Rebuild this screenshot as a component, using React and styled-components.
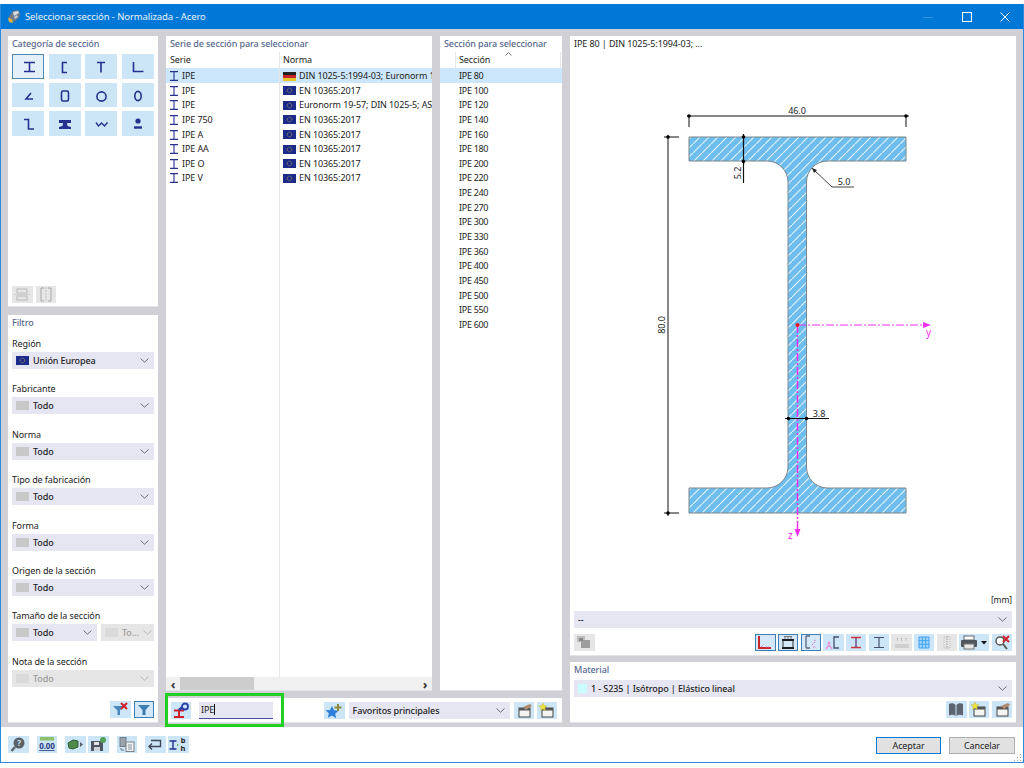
import React from "react";
import styled, { createGlobalStyle } from "styled-components";

const GlobalStyle = createGlobalStyle`
  html, body {
    margin: 0;
    background: #fff;
    font-family: "Noto Sans", "Open Sans", sans-serif;
    font-size: 9px;
    letter-spacing: -0.1px;
    color: #222;
  }
`;

const INK = "#26318f";

const Glyph = ({ children, w = 20, h = 17 }) => (
  <svg width={w} height={h} viewBox={`0 0 ${w} ${h}`} style={{ display: "block", flex: "none" }}>
    {children}
  </svg>
);

const Cat = ({ children }) => (
  <Glyph w={32} h={24}>
    <g fill="none" stroke={INK} strokeWidth="1.6">{children}</g>
  </Glyph>
);

const categories = [
  <path d="M12 8.5h11M12 17.5h11M17.5 8.5v9" />,
  <path d="M18 8.5h-4.5v10H18" />,
  <path d="M12 8.5h8M16 8.5v10" />,
  <path d="M11.5 8v9.5h10" />,
  <path d="M19 10l-5 6h7" />,
  <rect x="12.5" y="8" width="7" height="10" rx="1.5" />,
  <circle cx="16.5" cy="13.5" r="4.6" />,
  <ellipse cx="16" cy="13" rx="3.2" ry="4.6" />,
  <path d="M12 8.5h4.5v9.5h5.5" />,
  <path fill={INK} stroke="none" d="M10 9h12v3h-4l.5 3 3.5 1v2H10v-2l3.5-1 .5-3h-4z" />,
  <path strokeWidth="1.4" d="M11 11.5l2.5 3.5 3-3 3 3 3-3.5" />,
  <g>
    <circle cx="16" cy="10" r="2.6" fill={INK} stroke="none" />
    <path d="M12 16.5h8" strokeWidth="2.4" />
  </g>,
];

const EuFlag = () => (
  <Glyph w={13} h={9}>
    <rect width="13" height="9" fill="#1c2a8c" />
    <circle cx="6.5" cy="4.5" r="2.3" fill="none" stroke="#a99a4c" strokeWidth="0.9" strokeDasharray="0.9 0.6" />
  </Glyph>
);

const DeFlag = () => (
  <Glyph w={13} h={9}>
    <rect width="13" height="3" fill="#222" />
    <rect y="3" width="13" height="3" fill="#c8242b" />
    <rect y="6" width="13" height="3" fill="#e8c52c" />
  </Glyph>
);

const ListI = () => (
  <Glyph w={8} h={10}>
    <path d="M0 .6h8M0 9.4h8M4 .6v8.8" stroke={INK} strokeWidth="1.1" fill="none" />
  </Glyph>
);

const Chevron = ({ faded }) => (
  <Glyph w={9} h={5}>
    <path d="M.5.5L4.5 4.2 8.5.5" fill="none" stroke={faded ? "#b5b5b5" : "#6f6f78"} strokeWidth="1" />
  </Glyph>
);

const WindowBox = ({ children }) => (
  <Glyph>
    <rect x="5" y="6" width="11" height="9" fill="#f4f4f4" stroke="#444" />
    <rect x="5" y="6" width="11" height="2.5" fill="#555" />
    {children}
  </Glyph>
);

const icons = {
  flip: (
    <Glyph>
      <rect x="5" y="3" width="10" height="4" fill="none" stroke="#b8b8b8" />
      <rect x="5" y="10" width="10" height="4" fill="none" stroke="#b8b8b8" />
      <path d="M2 8.5h16" stroke="#d0d0d0" />
    </Glyph>
  ),
  mirror: (
    <Glyph>
      <path d="M8 2H5v13h3M12 2h3v13h-3" fill="none" stroke="#a8a8a8" />
      <path d="M10 1v15" stroke="#c0c0c0" strokeDasharray="2 1" />
    </Glyph>
  ),
  funnelX: (
    <Glyph>
      <path d="M3 5h11l-4 4.5V14H7.5V9.5z" fill="#4c88bd" />
      <path d="M11 2l6 6M17 2l-6 6" stroke="#d2202a" strokeWidth="2" />
    </Glyph>
  ),
  funnel: (
    <Glyph>
      <path d="M4 4h12l-4.5 5V14h-3V9z" fill="#3f7db5" />
    </Glyph>
  ),
  searchSection: (
    <Glyph>
      <path d="M3 8.5h10M3 15h10M8 8.5V15" stroke="#d2202a" strokeWidth="2" fill="none" />
      <path d="M8 8l3-2.500" stroke="#2a3fa6" strokeWidth="2.500" />
      <circle cx="14" cy="4.5" r="3" fill="#cde6f7" stroke="#2a3fa6" strokeWidth="1.800" />
    </Glyph>
  ),
  starPlus: (
    <Glyph>
      <path d="M8 4l2 4.300 4.500.5-3.300 3 .9 4.500L8 13.500 3.900 15.800l.9-4.500-3.300-3L6 8z" fill="#2e7fdb" />
      <path d="M14 2v7M10.500 5.500h7" stroke="#8b8a3a" strokeWidth="2" />
    </Glyph>
  ),
  editWindow: (
    <WindowBox>
      <path d="M9 5l7-3 2 2-6 4z" fill="#b08a70" />
    </WindowBox>
  ),
  newWindow: (
    <WindowBox>
      <path d="M6 1l1.200 2.500L10 4 7.800 5.600 8.400 8.400 6 7 3.600 8.400 4.200 5.600 2 4l2.800-.5z" fill="#f2e23c" stroke="#b5a82a" strokeWidth="0.4" />
    </WindowBox>
  ),
  book: (
    <Glyph>
      <path d="M3 3c2-1 5-1 6.500 1v11C8 13.500 5 13.500 3 14.500zM17 3c-2-1-5-1-6.500 1v11c1.500-1.500 4.500-1.500 6.500-.5z" fill="#5d6470" />
    </Glyph>
  ),
  corner: (
    <Glyph>
      <path d="M4 2v12h12" fill="none" stroke="#c8282c" strokeWidth="2" />
      <path d="M6 13l3-3M11 13h3" stroke="#d86bd0" strokeDasharray="1 1" />
    </Glyph>
  ),
  flange: (
    <Glyph>
      <path d="M4 6h12M4 14h12" stroke="#1d1d25" strokeWidth="2" />
      <path d="M5 6v8M15 6v8" stroke="#333" />
      <path d="M6 2.500h8M7 5V2M10 5V2M13 5V2" stroke="#777" />
    </Glyph>
  ),
  cornerMuted: (
    <Glyph>
      <path d="M5 2v12M5 2h4M5 14h4" fill="none" stroke="#5b6580" strokeWidth="1.300" />
      <path d="M11 11l3-3V5M12 13h3" stroke="#d86bd0" strokeDasharray="1.500 1" fill="none" />
    </Glyph>
  ),
  channelPink: (
    <Glyph>
      <path d="M16 3h-5v11h5" fill="none" stroke="#46506e" strokeWidth="1.300" />
      <circle cx="6" cy="9" r="1.500" fill="#e29ad8" />
      <path d="M3 15l3-4 3 4" fill="none" stroke="#e29ad8" strokeWidth="1.500" />
    </Glyph>
  ),
  iRed: (
    <Glyph>
      <path d="M5 3.500h10M5 13.500h10" stroke="#d2383c" strokeWidth="1.500" />
      <path d="M10 3.500v10" stroke="#5c3a78" strokeWidth="1.300" />
    </Glyph>
  ),
  iBlue: (
    <Glyph>
      <path d="M5 3.500h10M5 13.500h10M10 3.500v10" stroke="#46506e" strokeWidth="1.200" fill="none" />
    </Glyph>
  ),
  numbers: (
    <Glyph>
      <path d="M5.500 4v3M9.500 4v3M14 4v3" stroke="#a6a6a6" strokeDasharray="1 .5" />
      <path d="M3 11h14M3 13h14" stroke="#b8b8b8" />
    </Glyph>
  ),
  grid: (
    <Glyph>
      <rect x="5" y="3" width="10" height="11" fill="#a4d8fb" />
      <path d="M5 3h10v11H5zM8.300 3v11M11.700 3v11M5 6.700h10M5 10.300h10" stroke="#3d9fee" fill="none" />
    </Glyph>
  ),
  dotted: (
    <Glyph>
      <path d="M7 3h6v11H7z" fill="none" stroke="#bdbdbd" strokeDasharray="1 1" />
      <path d="M10 2v13" stroke="#9e9e9e" strokeDasharray="1.500 1" />
    </Glyph>
  ),
  printer: (
    <Glyph w={30}>
      <rect x="5" y="2" width="10" height="4" fill="#fff" stroke="#666" />
      <rect x="2" y="6" width="16" height="7" rx="1" fill="#50565c" />
      <rect x="5" y="10" width="10" height="5" fill="#e8e8e8" stroke="#777" />
      <path d="M22 7h6l-3 3.500z" fill="#111" />
    </Glyph>
  ),
  searchX: (
    <Glyph>
      <circle cx="8" cy="7" r="4" fill="#fff" stroke="#555" strokeWidth="1.500" />
      <path d="M11 10l4 5" stroke="#555" strokeWidth="2" />
      <path d="M11 2l6 6M17 2l-6 6" stroke="#d2202a" strokeWidth="2" />
    </Glyph>
  ),
  help: (
    <Glyph>
      <circle cx="11" cy="7" r="5.500" fill="#5b6066" />
      <path d="M7 11l-3.500 4" stroke="#5b6066" strokeWidth="2.400" />
      <text x="11" y="10" textAnchor="middle" fontSize="8" fontWeight="700" fill="#cde6f7">?</text>
    </Glyph>
  ),
  zero: (
    <Glyph>
      <rect x="3" y="1" width="14" height="3.500" fill="#8ec06a" />
      <text x="10" y="13" textAnchor="middle" fontSize="8" fontWeight="700" fill="#2a3a7e" textDecoration="underline">0.00</text>
    </Glyph>
  ),
  greenArrow: (
    <Glyph>
      <path d="M3 7l5-3 5 1v6l-5 2-4-1z" fill="#4f8a4a" stroke="#2f5f38" />
      <path d="M15 6l3 2.500-3 2.500z" fill="#59606a" />
    </Glyph>
  ),
  saveGreen: (
    <Glyph>
      <path d="M3 5h10l2 2v8H3z" fill="#4f5660" />
      <rect x="6" y="6" width="5" height="3" fill="#e4e4e4" />
      <rect x="6" y="11" width="6" height="4" fill="#cfd3d8" />
      <circle cx="15" cy="4" r="3" fill="#54a054" />
    </Glyph>
  ),
  docs: (
    <Glyph>
      <rect x="3" y="1.500" width="6" height="9" fill="#9aa2aa" stroke="#747b84" />
      <rect x="9" y="6" width="8" height="9.500" fill="#eef0f2" stroke="#7b828a" />
      <path d="M11 9h4M11 11h4M11 13h4" stroke="#8d949c" />
      <path d="M4 12v2h3" fill="none" stroke="#747b84" />
    </Glyph>
  ),
  back: (
    <Glyph>
      <path d="M6 4.500h9.500v6H4M7 7.500l-3 3 3 3" fill="none" stroke="#3f4656" strokeWidth="1.400" />
    </Glyph>
  ),
  sizes: (
    <Glyph>
      <path d="M1.500 5h7M1.500 13h7M5 5v8" stroke={INK} strokeWidth="1.400" />
      <path d="M9 8l2 1-2 1z" fill="#4aa24a" />
      <text x="15" y="7" textAnchor="middle" fontSize="7.500" fontWeight="700" fill="#222">b</text>
      <text x="15" y="15" textAnchor="middle" fontSize="7.500" fontWeight="700" fill="#222">h</text>
    </Glyph>
  ),
  chip: (
    <Glyph>
      <rect x="3" y="2" width="8" height="6" fill="#bdbdbd" />
      <rect x="7" y="6" width="9" height="8" fill="#9d9d9d" />
      <rect x="5" y="4" width="4" height="3" fill="#888" />
    </Glyph>
  ),
};

const series = [
  ["IPE", "DIN 1025-5:1994-03; Euronorm 19-57", "de"],
  ["IPE", "EN 10365:2017"],
  ["IPE", "Euronorm 19-57; DIN 1025-5; ASTM A6"],
  ["IPE 750", "EN 10365:2017"],
  ["IPE A", "EN 10365:2017"],
  ["IPE AA", "EN 10365:2017"],
  ["IPE O", "EN 10365:2017"],
  ["IPE V", "EN 10365:2017"],
];

const sizes = [80, 100, 120, 140, 160, 180, 200, 220, 240, 270, 300, 330, 360, 400, 450, 500, 550, 600];

const filters = ["Fabricante", "Norma", "Tipo de fabricación", "Forma", "Origen de la sección"];

const previewTools = [
  ["corner", "active"], ["flange", "active"], ["cornerMuted", "active"], ["channelPink"], ["iRed"],
  ["iBlue"], ["numbers", "off"], ["grid"], ["dotted", "off"],
];

const Select = ({ flag, swatch, value, off }) => (
  <SelectBox $off={off}>
    {flag}
    {swatch && <Swatch $off={off} />}
    <SelectText $off={off}>{value}</SelectText>
    <Chevron faded={off} />
  </SelectBox>
);

const Section = () => (
  <Drawing viewBox="570 52 446 540" width="446" height="540">
    <defs>
      <pattern id="hatch" width="9" height="9" patternUnits="userSpaceOnUse">
        <rect width="9" height="9" fill="#6dbdee" />
        <path d="M-1 10L10 -1" stroke="#e0f2fc" strokeWidth="1.2" />
      </pattern>
    </defs>
    <path
      d="M689 137H906V161H827A21 21 0 0 0 806.5 182V467A21 21 0 0 0 827 488H906V513H689V488H767A21 21 0 0 0 788 467V182A21 21 0 0 0 767 161H689Z"
      fill="url(#hatch)"
      stroke="#7d8588"
      strokeWidth="1"
    />
    <g stroke="#111" strokeWidth="1" fill="none">
      <path d="M687 116H909M689 116V127M906 116V127" />
      <path d="M668 135V516M664 137H679M664 513H679" />
      <path d="M743.500 134V183" strokeWidth="1.200" />
      <path d="M785 418.500H829" />
    </g>
    <path d="M812 168L832 187H854" stroke="#444" fill="none" />
    <path d="M812 168l5 2-3 3z" fill="#222" />
    <g fill="#000">
      <circle cx="689" cy="116" r="1.800" />
      <circle cx="906" cy="116" r="1.800" />
      <circle cx="668" cy="137" r="1.800" />
      <circle cx="668" cy="513" r="1.800" />
      <circle cx="743.500" cy="137" r="1.800" />
      <circle cx="743.500" cy="161.500" r="1.800" />
      <circle cx="788.500" cy="418.500" r="1.800" />
      <circle cx="806.500" cy="418.500" r="1.800" />
    </g>
    <g fill="#222" fontSize="9" fontFamily="Noto Sans, sans-serif">
      <text x="797" y="114" textAnchor="middle">46.0</text>
      <text x="844" y="185" textAnchor="middle">5.0</text>
      <text x="819" y="417" textAnchor="middle">3.8</text>
      <text transform="translate(665 325) rotate(-90)" textAnchor="middle">80.0</text>
      <text transform="translate(741 173) rotate(-90)" textAnchor="middle">5.2</text>
    </g>
    <path d="M798 325H925" stroke="#ee30ee" strokeDasharray="8 2 2 2" />
    <path d="M797.500 325V530" stroke="#ee30ee" strokeWidth="1.500" strokeDasharray="8 2 2 2" />
    <path d="M923 322l8 3-8 3zM794.500 529l3 8 3-8z" fill="#ee30ee" />
    <circle cx="797.500" cy="325" r="2" fill="#e8141c" />
    <g fill="#ee30ee" fontSize="10" fontFamily="Noto Sans, sans-serif">
      <text x="926" y="336">y</text>
      <text x="788" y="539">z</text>
    </g>
  </Drawing>
);

export default function App() {
  return (
    <Page>
      <GlobalStyle />
      <TitleBar>
        <svg width="14" height="15" viewBox="0 0 14 15">
          <path d="M1 9l5-7 5-1 2 3-1 5-5 4z" fill="#6f7a86" />
          <path d="M6 3l5-1 1 2-5 3z" fill="#d6dde4" />
          <path d="M7 8l3-2 1 2-3 2z" fill="#c2ccd6" />
          <path d="M1 9l4 1 1 4-4-1z" fill="#e2b23a" />
        </svg>
        <TitleText>Seleccionar sección - Normalizada - Acero</TitleText>
        <WindowButtons>
          <svg width="10" height="10" viewBox="0 0 10 10"><path d="M0 5.5h10" stroke="#3b94de" /></svg>
          <svg width="10" height="10" viewBox="0 0 10 10"><rect x=".5" y=".5" width="9" height="9" fill="none" stroke="#fff" /></svg>
          <svg width="10" height="10" viewBox="0 0 10 10"><path d="M.5.5l9 9M9.5.5l-9 9" stroke="#fff" /></svg>
        </WindowButtons>
      </TitleBar>

      <Main>
        <LeftColumn>
          <CategoryPanel>
            <PanelTitle>Categoría de sección</PanelTitle>
            <CategoryGrid>
              {categories.map((shape, i) => (
                <CategoryButton key={i} $active={i === 0}><Cat>{shape}</Cat></CategoryButton>
              ))}
            </CategoryGrid>
            <ToolRow>
              <ToolButton $off>{icons.flip}</ToolButton>
              <ToolButton $off>{icons.mirror}</ToolButton>
            </ToolRow>
          </CategoryPanel>

          <FilterPanel>
            <PanelTitle>Filtro</PanelTitle>
            <FilterGroup>
              <FilterLabel>Región</FilterLabel>
              <Select flag={<EuFlag />} value="Unión Europea" />
            </FilterGroup>
            {filters.map((label) => (
              <FilterGroup key={label}>
                <FilterLabel>{label}</FilterLabel>
                <Select swatch value="Todo" />
              </FilterGroup>
            ))}
            <FilterGroup>
              <FilterLabel>Tamaño de la sección</FilterLabel>
              <SplitRow>
                <Select swatch value="Todo" />
                <Select swatch off value="To..." />
              </SplitRow>
            </FilterGroup>
            <FilterGroup>
              <FilterLabel>Nota de la sección</FilterLabel>
              <Select swatch off value="Todo" />
            </FilterGroup>
            <FilterTools>
              <ToolButton>{icons.funnelX}</ToolButton>
              <ToolButton $active>{icons.funnel}</ToolButton>
            </FilterTools>
          </FilterPanel>
        </LeftColumn>

        <MiddleColumn>
          <ListsRow>
            <SeriesPanel>
              <PanelTitle>Serie de sección para seleccionar</PanelTitle>
              <SeriesHead>
                <span>Serie</span>
                <NormCell>Norma</NormCell>
              </SeriesHead>
              <SeriesBody>
                {series.map(([name, norm, flag], i) => (
                  <SeriesRow key={i} $selected={i === 0}>
                    <SerieCell><ListI /><span>{name}</span></SerieCell>
                    <NormCell>
                      {flag === "de" ? <DeFlag /> : <EuFlag />}
                      <NormText>{norm}</NormText>
                    </NormCell>
                  </SeriesRow>
                ))}
                <SeriesFiller><span /><NormCell /></SeriesFiller>
              </SeriesBody>
              <ScrollBar>
                <ScrollArrow>‹</ScrollArrow>
                <ScrollThumb />
                <ScrollArrow>›</ScrollArrow>
              </ScrollBar>
            </SeriesPanel>

            <SizePanel>
              <PanelTitle>Sección para seleccionar</PanelTitle>
              <SizeHead>
                <SortMark>
                  <svg width="7" height="4" viewBox="0 0 7 4"><path d="M.5 3.5L3.5.5l3 3" fill="none" stroke="#777" /></svg>
                </SortMark>
                <span>Sección</span>
              </SizeHead>
              {sizes.map((size, i) => (
                <SizeRow key={size} $selected={i === 0}>IPE {size}</SizeRow>
              ))}
            </SizePanel>
          </ListsRow>

          <SearchBar>
            <Highlight />
            <ToolButton>{icons.searchSection}</ToolButton>
            <SearchInput>IPE<Caret /></SearchInput>
            <FavoriteTools>
              <ToolButton>{icons.starPlus}</ToolButton>
              <Select value="Favoritos principales" />
              <ToolPair>
                <ToolButton>{icons.editWindow}</ToolButton>
                <ToolButton>{icons.newWindow}</ToolButton>
              </ToolPair>
            </FavoriteTools>
          </SearchBar>
        </MiddleColumn>

        <RightColumn>
          <PreviewPanel>
            <PreviewTitle>IPE 80 | DIN 1025-5:1994-03; ...</PreviewTitle>
            <Section />
            <UnitLabel>[mm]</UnitLabel>
            <PreviewSelect>
              <Select value="--" />
            </PreviewSelect>
            <PreviewTools>
              <ToolButton $off>{icons.chip}</ToolButton>
              <PreviewToolGroup>
                {previewTools.map(([name, state]) => (
                  <ToolButton key={name} $active={state === "active"} $off={state === "off"}>{icons[name]}</ToolButton>
                ))}
                <ToolButton $wide>{icons.printer}</ToolButton>
                <ToolButton>{icons.searchX}</ToolButton>
              </PreviewToolGroup>
            </PreviewTools>
          </PreviewPanel>

          <MaterialPanel>
            <PreviewTitle $accent>Material</PreviewTitle>
            <PreviewSelect>
              <SelectBox>
                <MaterialSwatch />
                <SelectText>1 - S235 | Isótropo | Elástico lineal</SelectText>
                <Chevron />
              </SelectBox>
            </PreviewSelect>
            <MaterialTools>
              <ToolButton>{icons.book}</ToolButton>
              <ToolButton>{icons.newWindow}</ToolButton>
              <ToolButton>{icons.editWindow}</ToolButton>
            </MaterialTools>
          </MaterialPanel>
        </RightColumn>
      </Main>

      <Footer>
        <ToolButton>{icons.help}</ToolButton>
        <ToolButton>{icons.zero}</ToolButton>
        <ToolPair>
          <ToolButton>{icons.greenArrow}</ToolButton>
          <ToolButton>{icons.saveGreen}</ToolButton>
        </ToolPair>
        <ToolButton>{icons.docs}</ToolButton>
        <ToolPair>
          <ToolButton>{icons.back}</ToolButton>
          <ToolButton>{icons.sizes}</ToolButton>
        </ToolPair>
        <DialogButtons>
          <DialogButton $primary>Aceptar</DialogButton>
          <DialogButton>Cancelar</DialogButton>
        </DialogButtons>
        <Grip>
          <svg width="8" height="8" viewBox="0 0 8 8"><path d="M6 1h1v1H6zM3 4h1v1H3zM6 4h1v1H6zM0 7h1v1H0zM3 7h1v1H3zM6 7h1v1H6z" fill="#aaa" /></svg>
        </Grip>
      </Footer>
    </Page>
  );
}

const Page = styled.div`
  position: relative;
  box-sizing: border-box;
  width: 1024px;
  height: 759px;
  margin-top: 4px;
  display: flex;
  flex-direction: column;
  border: 1px solid #2a8be0;
  border-top: 0;
`;

const TitleBar = styled.div`
  height: 25px;
  flex: none;
  display: flex;
  align-items: center;
  gap: 4px;
  padding-left: 6px;
  background: #0078d7;
`;

const TitleText = styled.div`
  color: #e8f3fc;
  font-size: 9.5px;
`;

const WindowButtons = styled.div`
  margin-left: auto;
  margin-right: 13px;
  display: flex;
  gap: 28px;
  svg:nth-child(1) { margin-right: 1px; }
`;

const Main = styled.div`
  flex: none;
  height: 698px;
  box-sizing: border-box;
  display: flex;
  gap: 8px;
  padding: 7px 7px 5px;
  background: #d0d0d6;
`;

const Panel = styled.div`
  background: #fff;
  box-shadow: 0 1px 0 #e4e4e8;
`;

const PanelTitle = styled.div`
  height: 16px;
  line-height: 16px;
  padding-left: 4px;
  color: #56688f;
  font-weight: 500;
  white-space: nowrap;
`;

const LeftColumn = styled.div`
  width: 150px;
  display: flex;
  flex-direction: column;
  gap: 9px;
`;

const CategoryPanel = styled(Panel)`
  height: 270px;
  display: flex;
  flex-direction: column;
`;

const CategoryGrid = styled.div`
  display: grid;
  grid-template-columns: repeat(4, 32px);
  grid-auto-rows: 24.5px;
  gap: 4px 4.5px;
  padding: 2px 4px;
`;

const CategoryButton = styled.div`
  box-sizing: border-box;
  background: ${(p) => (p.$active ? "#e3eff9" : "#cde6f7")};
  border: ${(p) => (p.$active ? "1px solid #4f86b3" : "0")};
  display: flex;
  align-items: center;
  justify-content: center;
`;

const ToolRow = styled.div`
  margin-top: auto;
  display: flex;
  gap: 3px;
  padding: 0 4px 3px;
`;

const ToolButton = styled.div`
  box-sizing: border-box;
  flex: none;
  width: ${(p) => (p.$wide ? "30px" : "20.5px")};
  height: 17px;
  display: flex;
  align-items: center;
  justify-content: center;
  background: ${(p) => (p.$off ? "#e6e6e6" : p.$active ? "#d5e8f8" : "#cde6f7")};
  border: ${(p) => (p.$active ? "1px solid #3f7db5" : "0")};
`;

const FilterPanel = styled(Panel)`
  height: 407px;
  display: flex;
  flex-direction: column;
`;

const FilterGroup = styled.div`
  height: 45.4px;
  padding: 6px 4px 0;
  box-sizing: border-box;
  flex: none;
`;

const FilterLabel = styled.div`
  height: 15px;
  line-height: 14px;
  white-space: nowrap;
`;

const SplitRow = styled.div`
  display: grid;
  grid-template-columns: 85px 53px;
  gap: 4px;
`;

const SelectBox = styled.div`
  box-sizing: border-box;
  height: 17px;
  min-width: 0;
  flex: 1;
  display: flex;
  align-items: center;
  gap: 4px;
  padding: 0 5px 0 4px;
  background: ${(p) => (p.$off ? "#e6e6e6" : "#e6e6f2")};
`;

const Swatch = styled.div`
  width: 13px;
  height: 9px;
  flex: none;
  background: ${(p) => (p.$off ? "#dadada" : "#c8c8c8")};
`;

const MaterialSwatch = styled.div`
  width: 9px;
  height: 9px;
  flex: none;
  background: #c9ffff;
`;

const SelectText = styled.div`
  flex: 1 0 auto;
  white-space: nowrap;
  font-weight: 500;
  color: ${(p) => (p.$off ? "#9a9a9a" : "#222")};
`;

const FilterTools = styled.div`
  margin-top: auto;
  display: flex;
  justify-content: flex-end;
  gap: 3px;
  padding: 0 4px 4px;
`;

const MiddleColumn = styled.div`
  width: 396px;
  display: flex;
  flex-direction: column;
  gap: 8px;
`;

const ListsRow = styled.div`
  height: 654px;
  display: flex;
  gap: 8px;
`;

const SeriesPanel = styled(Panel)`
  width: 266px;
  display: flex;
  flex-direction: column;
`;

const seriesColumns = "113px 1fr";

const SeriesHead = styled.div`
  display: grid;
  grid-template-columns: ${seriesColumns};
  height: 16px;
  line-height: 16px;
  span { padding-left: 4px; }
`;

const SeriesBody = styled.div`
  flex: 1;
  display: flex;
  flex-direction: column;
  min-height: 0;
`;

const SeriesRow = styled.div`
  display: grid;
  grid-template-columns: ${seriesColumns};
  height: 14.65px;
  line-height: 16px;
  background: ${(p) => (p.$selected ? "#cce6fb" : "transparent")};
`;

const SeriesFiller = styled(SeriesRow)`
  flex: 1;
`;

const SerieCell = styled.div`
  display: flex;
  align-items: center;
  gap: 4px;
  padding-left: 4px;
`;

const NormCell = styled.div`
  display: flex;
  align-items: center;
  gap: 3px;
  padding-left: 3px;
  min-width: 0;
  overflow: hidden;
  white-space: nowrap;
  border-left: 1px solid #e6e6ea;
`;

const NormText = styled.span`
  white-space: nowrap;
`;

const ScrollBar = styled.div`
  height: 13px;
  flex: none;
  display: flex;
  align-items: center;
  background: #f0f0f0;
`;

const ScrollArrow = styled.div`
  width: 14px;
  flex: none;
  text-align: center;
  font-size: 13px;
  font-weight: 700;
  line-height: 12px;
  color: #333;
  &:last-child { margin-left: auto; }
`;

const ScrollThumb = styled.div`
  width: 74px;
  height: 13px;
  background: #cdcdcd;
`;

const SizePanel = styled(Panel)`
  width: 122px;
`;

const SizeHead = styled.div`
  position: relative;
  height: 16px;
  line-height: 16px;
  margin: 0 1px 0 15px;
  padding-left: 3px;
  border-left: 1px solid #e6e6ea;
  border-right: 1px solid #e6e6ea;
`;

const SortMark = styled.div`
  position: absolute;
  top: 0;
  left: 49px;
  line-height: 0;
`;

const SizeRow = styled.div`
  height: 14.65px;
  line-height: 16px;
  padding-left: 19px;
  letter-spacing: -0.3px;
  background: ${(p) => (p.$selected ? "#cce6fb" : "transparent")};
`;

const SearchBar = styled(Panel)`
  position: relative;
  height: 24px;
  display: flex;
  align-items: center;
  padding-left: 4.5px;
`;

const Highlight = styled.div`
  position: absolute;
  left: -1px;
  top: -5px;
  width: 119px;
  height: 34px;
  box-sizing: border-box;
  border: 3px solid #22cf22;
  pointer-events: none;
`;

const SearchInput = styled.div`
  box-sizing: border-box;
  width: 74px;
  height: 17px;
  margin-left: 8px;
  padding-left: 2px;
  display: flex;
  align-items: center;
  background: #e6e6f2;
  border-bottom: 1px solid #4b4b9c;
`;

const Caret = styled.span`
  width: 1px;
  height: 11px;
  background: #111;
`;

const FavoriteTools = styled.div`
  margin-left: 51px;
  width: 233px;
  display: flex;
  align-items: center;
  gap: 4px;
`;

const ToolPair = styled.div`
  display: flex;
  flex: none;
  gap: 2.5px;
`;

const RightColumn = styled.div`
  width: 446px;
  display: flex;
  flex-direction: column;
  gap: 7px;
`;

const PreviewPanel = styled(Panel)`
  height: 619px;
  display: flex;
  flex-direction: column;
`;

const PreviewTitle = styled.div`
  height: 16px;
  line-height: 16px;
  padding-left: 4px;
  flex: none;
  color: ${(p) => (p.$accent ? "#56688f" : "#222")};
  font-weight: ${(p) => (p.$accent ? 500 : 400)};
`;

const Drawing = styled.svg`
  display: block;
  flex: none;
`;

const UnitLabel = styled.div`
  height: 19px;
  padding-right: 4px;
  text-align: right;
  line-height: 16px;
  font-size: 8.5px;
`;

const PreviewSelect = styled.div`
  flex: none;
  display: flex;
  margin: 0 4px;
`;

const PreviewTools = styled.div`
  display: flex;
  justify-content: space-between;
  margin: 6px 4px 0;
`;

const PreviewToolGroup = styled.div`
  display: flex;
  gap: 2.2px;
`;

const MaterialPanel = styled(Panel)`
  height: 60px;
  display: flex;
  flex-direction: column;
  ${PreviewSelect} { margin-top: 2px; }
`;

const MaterialTools = styled.div`
  display: flex;
  justify-content: flex-end;
  gap: 2.2px;
  margin: 4px 4px 0;
`;

const Footer = styled.div`
  flex: 1;
  display: flex;
  align-items: flex-start;
  gap: 8px;
  padding: 9px 8px 0 7px;
  position: relative;
`;

const DialogButtons = styled.div`
  margin-left: auto;
  display: flex;
  gap: 8px;
  padding-top: 1px;
`;

const DialogButton = styled.div`
  box-sizing: border-box;
  width: ${(p) => (p.$primary ? "65px" : "66px")};
  height: 17px;
  line-height: 15.5px;
  text-align: center;
  background: #e1e1e1;
  border: ${(p) => (p.$primary ? "1.5px solid #0078d7" : "1px solid #adadad")};
`;

const Grip = styled.div`
  position: absolute;
  right: 1px;
  bottom: 1px;
  line-height: 0;
`;
